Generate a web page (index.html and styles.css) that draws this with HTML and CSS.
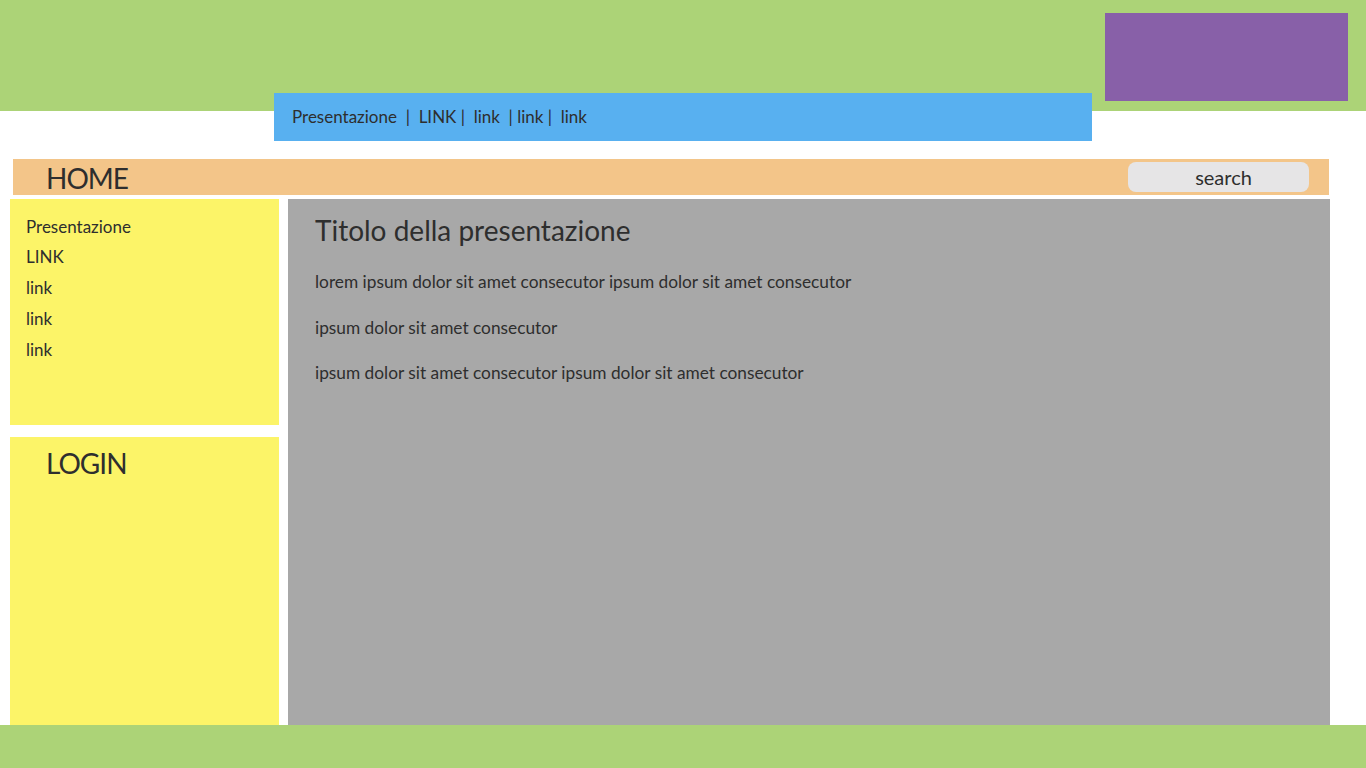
FILE: index.html
```html
<!DOCTYPE html>
<html lang="it">
<head>
<meta charset="utf-8">
<title>Presentazione</title>
<link rel="stylesheet" href="styles.css">
</head>
<body>
<header class="header">
  <nav class="topnav">Presentazione &nbsp;|&nbsp; LINK |&nbsp; link &nbsp;| link |&nbsp; link</nav>
  <div class="logo"></div>
</header>
<div class="bar">
  <span class="home">HOME</span>
  <div class="search">search</div>
</div>
<div class="main">
  <aside class="side">
    <ul class="menu">
      <li>Presentazione</li>
      <li>LINK</li>
      <li>link</li>
      <li>link</li>
      <li>link</li>
    </ul>
    <div class="login">LOGIN</div>
  </aside>
  <section class="content">
    <h1 class="title">Titolo della presentazione</h1>
    <p>lorem ipsum dolor sit amet consecutor ipsum dolor sit amet consecutor</p>
    <p>ipsum dolor sit amet consecutor</p>
    <p>ipsum dolor sit amet consecutor ipsum dolor sit amet consecutor</p>
  </section>
</div>
<footer class="footer"></footer>
</body>
</html>
```
FILE: styles.css
```css
* { box-sizing: border-box; }
html, body { margin: 0; padding: 0; }
body {
  font-family: Lato, "Open Sans", sans-serif;
  color: #2e2e2e;
  background: #ffffff;
  width: 1366px;
  height: 768px;
  overflow: hidden;
}
.header {
  height: 111px;
  background: #acd377;
  display: flex;
  align-items: flex-start;
}
.topnav {
  margin-left: 274px;
  margin-top: 93px;
  width: 818px;
  height: 48px;
  background: #58b0f0;
  padding-left: 18px;
  font-size: 17px;
  line-height: 48px;
  white-space: nowrap;
}
.logo {
  margin-left: 13px;
  margin-top: 13px;
  width: 243px;
  height: 88px;
  background: #8860a8;
}
.bar {
  margin-top: 48px;
  margin-left: 13px;
  width: 1316px;
  height: 36px;
  background: #f3c589;
  display: flex;
  align-items: flex-start;
  justify-content: space-between;
}
.home {
  margin-left: 33px;
  margin-top: 1px;
  font-size: 28px;
  letter-spacing: -1px;
  line-height: 36px;
}
.search {
  margin-top: 3px;
  margin-right: 20px;
  width: 181px;
  height: 30px;
  border-radius: 8px;
  background: #e6e5e6;
  font-size: 20px;
  line-height: 30px;
  text-align: center;
  padding-left: 10px;
}
.main {
  margin-top: 4px;
  display: flex;
  height: 526px;
}
.side {
  margin-left: 10px;
  width: 269px;
  display: flex;
  flex-direction: column;
  gap: 12px;
}
.menu {
  list-style: none;
  margin: 0;
  height: 226px;
  background: #fcf468;
  padding: 12.5px 0 0 16px;
  font-size: 17px;
  line-height: 30.75px;
}
.login {
  flex: 1;
  background: #fcf468;
  padding: 9px 0 0 36px;
  font-size: 28px;
  letter-spacing: -1px;
  line-height: 34px;
}
.content {
  margin-left: 9px;
  width: 1042px;
  background: #a8a8a8;
  padding: 14px 0 0 27px;
  display: flex;
  flex-direction: column;
  gap: 24px;
}
.title {
  margin: 0;
  font-size: 28px;
  font-weight: normal;
  line-height: 34px;
}
.content p {
  margin: 0;
  font-size: 17.3px;
  line-height: 21.5px;
}
.footer {
  height: 43px;
  background: #acd377;
}
```
